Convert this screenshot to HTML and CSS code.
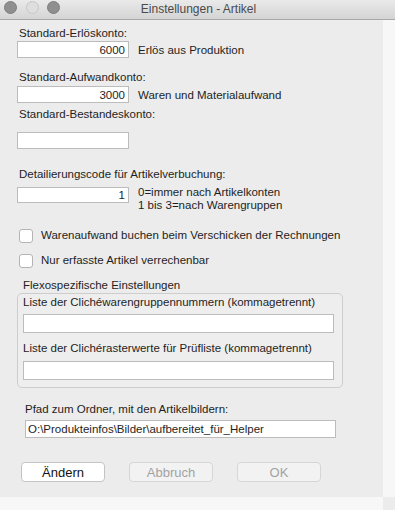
FILE: index.html
```html
<!DOCTYPE html>
<html lang="de">
<head>
  <meta charset="UTF-8" />
  <title>Einstellungen - Artikel</title>
  <link rel="stylesheet" href="styles.css">
</head>
<body>
  <div class="screen">
    <div class="titlebar">
      <div class="lights">
        <span class="light"></span>
        <span class="light mid"></span>
        <span class="light"></span>
      </div>
      <div class="title">Einstellungen - Artikel</div>
    </div>

    <div class="main">
      <div class="window">
        <div class="field f1">
          <label>Standard-Erlöskonto:</label>
          <div class="row">
            <input class="num" type="text" value="6000">
            <span class="note">Erlös aus Produktion</span>
          </div>
        </div>

        <div class="field f2">
          <label>Standard-Aufwandkonto:</label>
          <div class="row">
            <input class="num" type="text" value="3000">
            <span class="note">Waren und Materialaufwand</span>
          </div>
        </div>

        <div class="field f3">
          <label>Standard-Bestandeskonto:</label>
          <div class="row">
            <input class="num" type="text" value="">
          </div>
        </div>

        <div class="field f4">
          <label>Detailierungscode für Artikelverbuchung:</label>
          <div class="row top">
            <input class="num" type="text" value="1">
            <span class="note multi">0=immer nach Artikelkonten<br>1 bis 3=nach Warengruppen</span>
          </div>
        </div>

        <label class="check c1"><input type="checkbox"> Warenaufwand buchen beim Verschicken der Rechnungen</label>
        <label class="check c2"><input type="checkbox"> Nur erfasste Artikel verrechenbar</label>

        <div class="group-title">Flexospezifische Einstellungen</div>
        <div class="group">
          <label>Liste der Clichéwarengruppennummern (kommagetrennt)</label>
          <input class="wide" type="text" value="">
          <label class="second">Liste der Clichérasterwerte für Prüfliste (kommagetrennt)</label>
          <input class="wide" type="text" value="">
        </div>

        <div class="path">
          <label>Pfad zum Ordner, mit den Artikelbildern:</label>
          <input class="wide" type="text" value="O:\Produkteinfos\Bilder\aufbereitet_für_Helper">
        </div>

        <div class="buttons">
          <button class="btn">Ändern</button>
          <button class="btn" disabled>Abbruch</button>
          <button class="btn" disabled>OK</button>
        </div>
      </div>
      <div class="side"></div>
    </div>

    <div class="foot">
      <div class="foot-left"></div>
      <div class="foot-corner"></div>
    </div>
  </div>
</body>
</html>
```

FILE: styles.css
```css
body {
  margin: 0;
  font-family: "Liberation Sans", Arial, sans-serif;
  font-size: 11.5px;
  color: #1e1e1e;
}

.screen {
  width: 395px;
  height: 510px;
  display: flex;
  flex-direction: column;
  overflow: hidden;
}

.titlebar {
  height: 19px;
  border-bottom: 1px solid #a8a8a8;
  background: linear-gradient(#eaeaea, #d4d4d4);
  display: flex;
  align-items: center;
  position: relative;
}

.lights {
  display: flex;
  gap: 8.5px;
  padding-left: 4px;
  margin-top: -4px;
}

.light {
  width: 11px;
  height: 11px;
  border-radius: 50%;
  background: #8f8f8f;
  border: 0.5px solid #7e7e7e;
}

.light.mid {
  background: #dedede;
  border-color: #c6c6c6;
}

.title {
  position: absolute;
  left: 0;
  right: 0;
  top: 0;
  text-align: center;
  font-size: 12px;
  line-height: 19px;
  color: #4a4a4a;
  padding-left: 2px;
}

.main {
  height: 477px;
  display: flex;
}

.window {
  width: 383px;
  background: #ececec;
  padding: 6px 0 0 17px;
  box-sizing: border-box;
}

.side {
  flex: 1;
  background: #f7f7f7;
}

.foot {
  flex: 1;
  display: flex;
}

.foot-left {
  width: 383px;
  background: #f7f7f7;
}

.foot-corner {
  flex: 1;
  background: #ececec;
}

label {
  display: block;
  line-height: 15px;
}

.field label {
  margin-left: 2px;
}

.row {
  display: flex;
  align-items: center;
}

.row.top {
  align-items: flex-start;
}

input[type="text"] {
  box-sizing: border-box;
  border: 1px solid #bcbcbc;
  background: #fff;
  font-family: "Liberation Sans", Arial, sans-serif;
  font-size: 11.5px;
  color: #1e1e1e;
  padding: 0 3px;
  margin: 0;
  outline: none;
}

.num {
  width: 112px;
  height: 17px;
  text-align: right;
}

.note {
  margin-left: 9px;
}

.note.multi {
  line-height: 13px;
  margin-top: -1px;
}

.f2 { margin-top: 12px; }
.f2 label { margin-bottom: 1px; }
.f3 { margin-top: 4px; }
.f3 label { margin-bottom: 10px; }
.f4 { margin-top: 18px; }
.f4 label { margin-bottom: 5px; }
.f4 .num { height: 16px; }

.check {
  display: flex;
  align-items: center;
  margin-left: 2px;
}

.check input {
  appearance: none;
  width: 14px;
  height: 14px;
  margin: 0 8px 0 0;
  border: 1px solid #b4b4b4;
  border-radius: 3px;
  background: #fff;
  box-sizing: border-box;
}

.c1 { margin-top: 16px; }
.c2 { margin-top: 10px; }

.group-title {
  margin: 10px 0 0 6px;
  line-height: 15px;
}

.group {
  width: 326px;
  height: 95px;
  box-sizing: border-box;
  border: 1px solid #cdcdcd;
  border-radius: 5px;
  background: #eeeeee;
  padding: 1px 0 0 5px;
}

.group label {
  margin-bottom: 4px;
}

.group label.second {
  margin-top: 8px;
  margin-bottom: 5px;
}

.group .wide {
  width: 311px;
  height: 19px;
}

.path {
  margin: 14px 0 0 8px;
}

.path label {
  margin-bottom: 3px;
}

.path .wide {
  width: 311px;
  height: 18px;
  padding: 0 2px;
}

.buttons {
  display: flex;
  gap: 24px;
  margin: 24px 0 0 4px;
}

.btn {
  width: 84px;
  height: 20px;
  box-sizing: border-box;
  border: 1px solid #c4c4c4;
  border-radius: 4px;
  background: #fff;
  font-family: "Liberation Sans", Arial, sans-serif;
  font-size: 13px;
  color: #111;
  padding: 0;
}

.btn:disabled {
  background: #f2f2f2;
  border-color: #d6d6d6;
  color: #a2a2a2;
}
```
